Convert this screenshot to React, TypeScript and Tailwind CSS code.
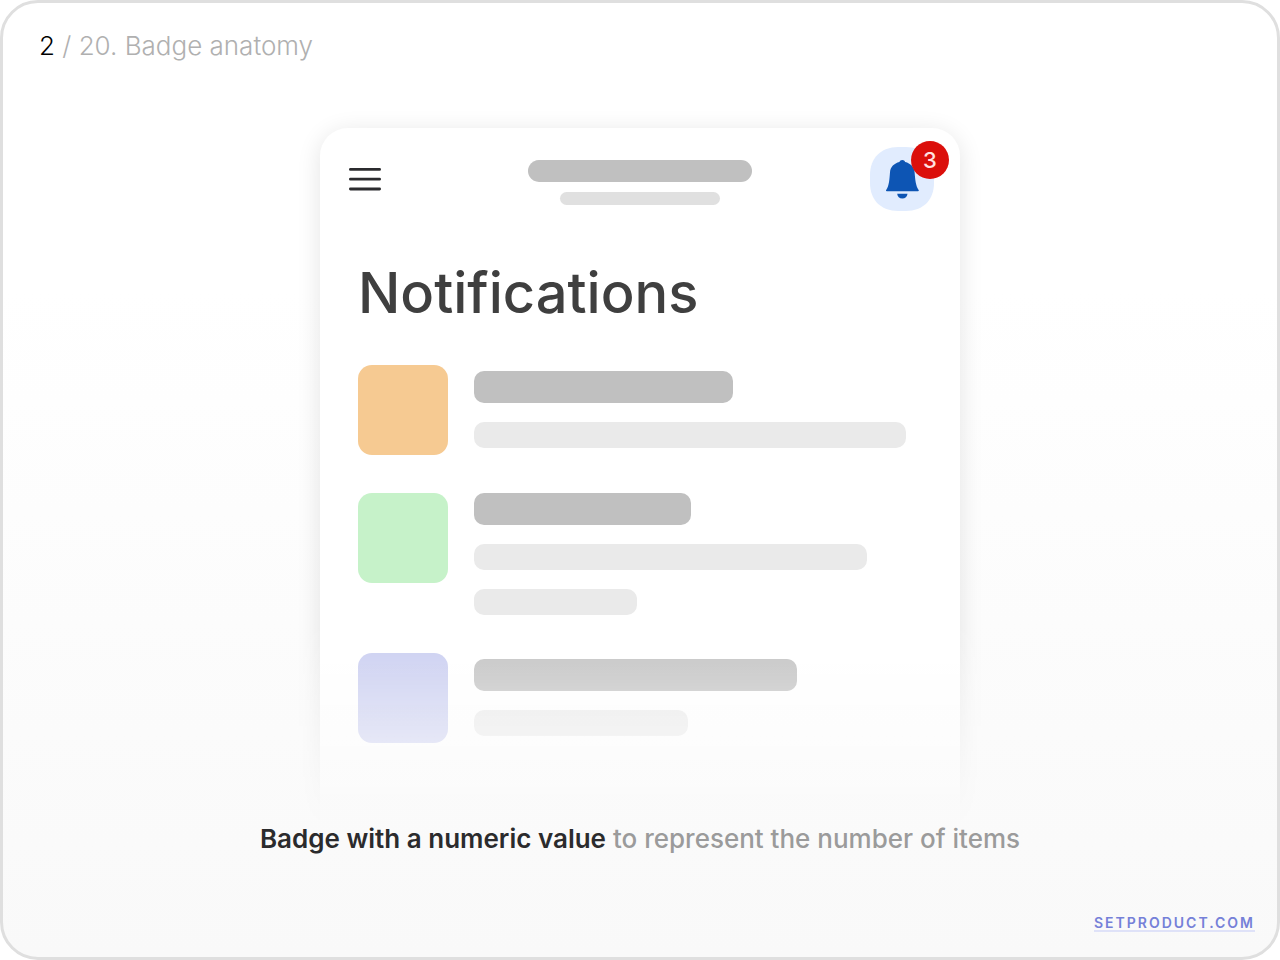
import clsx from 'clsx'

interface NotificationItem {
  id: string
  tile: string
  title: number
  lines: number[]
}

const items: NotificationItem[] = [
  { id: 'orange', tile: 'bg-[#f6ca92]', title: 259, lines: [432] },
  { id: 'green', tile: 'bg-[#c6f2c9]', title: 217, lines: [393, 163] },
  { id: 'indigo', tile: 'bg-[#c8ccf0]', title: 323, lines: [214] },
]

function MenuButton() {
  return (
    <button type="button" aria-label="Open menu" className="cursor-pointer self-center justify-self-start px-[3px]">
      <svg viewBox="0 0 32 24" className="block h-6 w-8" stroke="#2b2b2e" strokeWidth="2.8" strokeLinecap="round">
        <path d="M1.4 2.4H30.6M1.4 12.2H30.6M1.4 22H30.6" />
      </svg>
    </button>
  )
}

function BellButton({ count }: { count: number }) {
  return (
    <button
      type="button"
      aria-label="Notifications"
      className="relative grid size-16 cursor-pointer place-items-center justify-self-end"
    >
      <svg viewBox="0 0 64 64" className="block size-16">
        <path
          d="M28 0H36C53 0 64 11 64 28V36C64 53 53 64 36 64H28C11 64 0 53 0 36V28C0 11 11 0 28 0Z"
          fill="#e1ecfe"
        />
        <path
          d="M32.3 13C30.9 13 29.8 13.8 29.4 14.9C24.2 16.2 20.4 19.7 20 25.2C19.4 32.5 19.2 38.5 16.2 43C15.7 43.7 15.9 44.2 16.8 44.2H48C48.9 44.2 49.1 43.7 48.6 43C45.6 38.5 45.2 32.5 44.6 25.2C44.2 19.7 40.4 16.2 35.2 14.9C34.8 13.8 33.7 13 32.3 13Z"
          fill="#0d55b4"
        />
        <path d="M27.2 46.8H37.5C37.2 49.7 35.2 51.6 32.3 51.6S27.5 49.7 27.2 46.8Z" fill="#0d55b4" />
      </svg>
      <span className="absolute -top-1.5 -right-[15px] grid size-[38px] place-items-center rounded-full bg-[#db0f0b] text-[22px] font-medium text-[#ffe1e1]">
        {count}
      </span>
    </button>
  )
}

function ItemRow({ item }: { item: NotificationItem }) {
  return (
    <li className="flex items-start gap-[26px]">
      <span className={clsx('size-[90px] shrink-0 rounded-[14px]', item.tile)} />
      <div className={clsx('flex min-w-0 flex-1 flex-col gap-[19px]', item.lines.length === 1 && 'pt-1.5')}>
        <span className="h-8 max-w-full rounded-[10px] bg-[#c0c0c0]" style={{ width: item.title }} />
        {item.lines.map((width) => (
          <span key={width} className="h-[26px] max-w-full rounded-[10px] bg-[#eaeaea]" style={{ width }} />
        ))}
      </div>
    </li>
  )
}

function PhoneCard() {
  return (
    // Horizontal and top padding keeps the shadow inside the mask.
    <div className="w-full max-w-[720px] self-center overflow-hidden px-10 pt-10 [mask-image:linear-gradient(to_bottom,black_535px,transparent_740px)]">
      <section className="min-h-[707px] rounded-t-[28px] bg-white shadow-[0_4px_24px_rgba(0,0,0,0.11)]">
        <header className="grid grid-cols-[1fr_auto_1fr] items-start px-[26px] pt-[19px]">
          <MenuButton />
          <div className="flex flex-col items-center gap-2.5 pt-[13px]">
            <span className="h-[22px] w-56 rounded-full bg-[#c0c0c0]" />
            <span className="h-[13px] w-40 rounded-full bg-[#e0e0e0]" />
          </div>
          <BellButton count={3} />
        </header>
        <div className="px-[38px] pt-[50px]">
          <h1 className="text-[56px] leading-[64px] font-medium text-[#3f3f3f]">Notifications</h1>
          <ul className="mt-10 flex flex-col gap-[38px]">
            {items.map((item) => (
              <ItemRow key={item.id} item={item} />
            ))}
          </ul>
        </div>
      </section>
    </div>
  )
}

export default function App() {
  return (
    <div className="bg-white font-['Inter',sans-serif]">
      <main className="flex min-h-screen flex-col rounded-[38px] border-[3px] border-[#dfdfdf] bg-linear-to-b from-white from-30% to-[#f9f9f9]">
        <p className="px-9 pt-[27px] text-[26px] leading-8 font-light text-[#b0b0b0]">
          <span className="text-black">2</span> / 20. Badge anatomy
        </p>
        <div className="mt-[26px] flex flex-col">
          <PhoneCard />
        </div>
        <p className="-mt-3 px-6 text-center text-[26px] leading-8 font-medium text-[#9b9b9b]">
          <strong className="font-semibold text-[#2b2b2d]">Badge with a numeric value</strong> to represent the number
          of items
        </p>
        <footer className="mt-auto flex justify-end px-[22px] pb-[25px]">
          <a
            href="#"
            className="border-b-2 border-[#dfe2f8] text-[14px] leading-[14px] font-semibold tracking-[2px] text-[#7580d8]"
          >
            SETPRODUCT.COM
          </a>
        </footer>
      </main>
    </div>
  )
}
